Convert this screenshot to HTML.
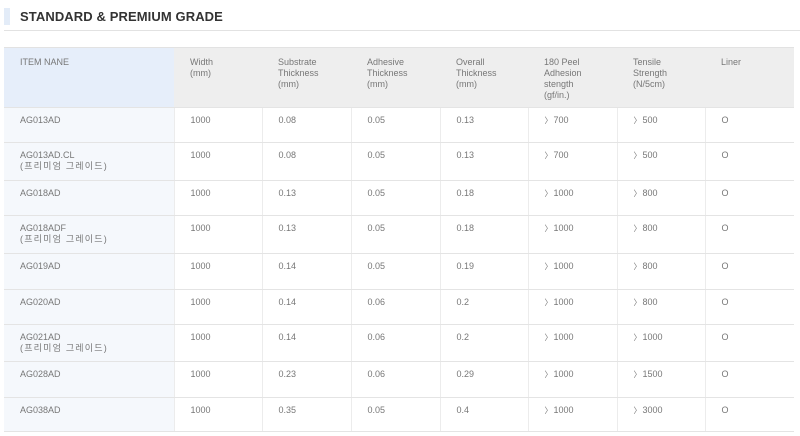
<!DOCTYPE html>
<html><head><meta charset="utf-8"><style>
body{margin:0;width:800px;height:436px;background:#fff;overflow:hidden;font-family:"Liberation Sans","Noto Sans CJK KR",sans-serif;}
.bar{position:absolute;left:4px;top:8px;width:6px;height:17px;background:#e3ecf8;}
.title{position:absolute;left:20px;top:9px;font-size:13px;font-weight:bold;color:#333;letter-spacing:0.1px;}
.hr{position:absolute;left:4px;top:30px;width:796px;height:1px;background:#e2e2e2;}
table{position:absolute;left:4px;top:47px;width:790px;border-collapse:collapse;table-layout:fixed;font-size:9px;color:#777;line-height:11px;}
td{vertical-align:top;padding:7px 0 0 16px;border-bottom:1px solid #e4e4e4;border-left:1px solid #ececec;box-sizing:border-box;}
td:first-child{border-left:none;background:#f5f8fc;}
tr.h td{background:#eeeeee;border-left:none;border-top:1px solid #e2e2e2;padding-top:9px;}
tr.h td:first-child{background:#e6eefa;}
.k{letter-spacing:1.2px;}
.g{font-size:8px;margin-right:1px;}
</style></head><body>
<div class="bar"></div><div class="title">STANDARD &amp; PREMIUM GRADE</div><div class="hr"></div>
<table>
<colgroup><col style="width:170px"><col style="width:88px"><col style="width:89px"><col style="width:89px"><col style="width:88px"><col style="width:89px"><col style="width:88px"><col style="width:89px"></colgroup>
<tr class="h" style="height:60px"><td>ITEM NANE</td><td>Width<br>(mm)</td><td>Substrate<br>Thickness<br>(mm)</td><td>Adhesive<br>Thickness<br>(mm)</td><td>Overall<br>Thickness<br>(mm)</td><td>180 Peel<br>Adhesion<br>stength<br>(gf/in.)</td><td>Tensile<br>Strength<br>(N/5cm)</td><td>Liner</td></tr>
<tr style="height:35px"><td>AG013AD</td><td>1000</td><td>0.08</td><td>0.05</td><td>0.13</td><td><span class="g">〉</span>700</td><td><span class="g">〉</span>500</td><td>O</td></tr>
<tr style="height:38px"><td>AG013AD.CL<br><span class="k">(프리미엄 그레이드)</span></td><td>1000</td><td>0.08</td><td>0.05</td><td>0.13</td><td><span class="g">〉</span>700</td><td><span class="g">〉</span>500</td><td>O</td></tr>
<tr style="height:35px"><td>AG018AD</td><td>1000</td><td>0.13</td><td>0.05</td><td>0.18</td><td><span class="g">〉</span>1000</td><td><span class="g">〉</span>800</td><td>O</td></tr>
<tr style="height:38px"><td>AG018ADF<br><span class="k">(프리미엄 그레이드)</span></td><td>1000</td><td>0.13</td><td>0.05</td><td>0.18</td><td><span class="g">〉</span>1000</td><td><span class="g">〉</span>800</td><td>O</td></tr>
<tr style="height:36px"><td>AG019AD</td><td>1000</td><td>0.14</td><td>0.05</td><td>0.19</td><td><span class="g">〉</span>1000</td><td><span class="g">〉</span>800</td><td>O</td></tr>
<tr style="height:35px"><td>AG020AD</td><td>1000</td><td>0.14</td><td>0.06</td><td>0.2</td><td><span class="g">〉</span>1000</td><td><span class="g">〉</span>800</td><td>O</td></tr>
<tr style="height:37px"><td>AG021AD<br><span class="k">(프리미엄 그레이드)</span></td><td>1000</td><td>0.14</td><td>0.06</td><td>0.2</td><td><span class="g">〉</span>1000</td><td><span class="g">〉</span>1000</td><td>O</td></tr>
<tr style="height:36px"><td>AG028AD</td><td>1000</td><td>0.23</td><td>0.06</td><td>0.29</td><td><span class="g">〉</span>1000</td><td><span class="g">〉</span>1500</td><td>O</td></tr>
<tr style="height:34px"><td>AG038AD</td><td>1000</td><td>0.35</td><td>0.05</td><td>0.4</td><td><span class="g">〉</span>1000</td><td><span class="g">〉</span>3000</td><td>O</td></tr>
</table>
</body></html>
